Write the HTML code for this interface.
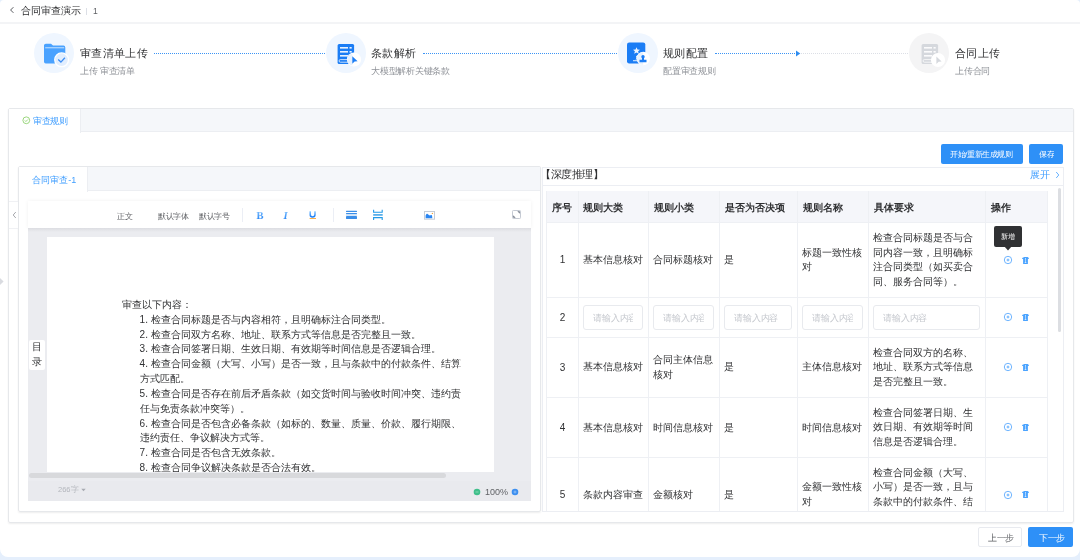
<!DOCTYPE html>
<html><head><meta charset="utf-8">
<style>
*{box-sizing:border-box;margin:0;padding:0}
html,body{width:1080px;height:560px;overflow:hidden}
body{background:#e5effc;font-family:"Liberation Sans",sans-serif;color:#303133;position:relative}
.abs{position:absolute}
.app{position:absolute;left:0;top:0;width:1080px;height:557.3px;background:#fff;border-radius:4px 4px 8px 8px;overflow:hidden}
.t{position:absolute;white-space:nowrap;line-height:1}
.app{will-change:transform}
</style></head><body>
<div class="app">
  <div class="abs" style="left:0;top:0;width:1080px;height:24px;border-bottom:2px solid #f3f4f6"></div>
  <svg class="abs" style="left:9px;top:6px" width="6" height="8" viewBox="0 0 6 8"><path d="M4.4 1.2 L1.6 4 L4.4 6.8" fill="none" stroke="#45474d" stroke-width=".9"/></svg>
  <div class="t" style="left:21px;top:5.7px;font-size:10px;color:#303133">合同审查演示</div>
  <div class="abs" style="left:86px;top:8px;width:1px;height:7px;background:#dcdfe6"></div>
  <div class="t" style="left:92.5px;top:6.5px;font-size:20px;transform:scale(0.4300);transform-origin:0 0;color:#606266">1</div>

  <div class="abs" style="left:34px;top:33px;width:40px;height:40px;border-radius:50%;background:#eff6ff"></div>
  <svg class="abs" style="left:42px;top:42px" width="28" height="26" viewBox="0 0 28 26">
    <path d="M2 3.5 Q2 1.7 3.8 1.7 H9 L11 3.6 H21.5 Q23.3 3.6 23.3 5.4 V19.8 Q23.3 21.6 21.5 21.6 H3.8 Q2 21.6 2 19.8 Z" fill="#4aa2ff"/>
    <rect x="3.2" y="5.2" width="19" height="1.1" fill="#bcdcff"/>
    <circle cx="19.6" cy="17.8" r="6.9" fill="#e1eeff" stroke="#fff" stroke-width="1.3"/>
    <path d="M16.2 17.5 L18.9 20.1 L22.9 15.8" fill="none" stroke="#3f8ff5" stroke-width="1.35"/>
  </svg>
  <div class="t" style="left:80px;top:46.5px;font-size:20px;transform:scale(0.5650);transform-origin:0 0;color:#303133">审查清单上传</div>
  <div class="t" style="left:80px;top:67.1px;font-size:20px;transform:scale(0.4375);transform-origin:0 0;color:#909399">上传 审查清单</div>
  <div class="abs" style="left:154px;top:53px;width:171px;border-top:1px dotted #3d95f5"></div>

  <div class="abs" style="left:325.7px;top:33px;width:40px;height:40px;border-radius:50%;background:#eff6ff"></div>
  <svg class="abs" style="left:336px;top:43px" width="26" height="26" viewBox="0 0 26 26">
    <rect x="1.6" y="1" width="16.5" height="20" rx="1.5" fill="#1b7df5"/>
    <rect x="4" y="4" width="8" height="1.6" fill="#fff" opacity=".9"/>
    <rect x="13.5" y="4" width="2.2" height="1.6" fill="#fff" opacity=".9"/>
    <rect x="4" y="8" width="8" height="1.6" fill="#fff" opacity=".9"/>
    <rect x="13.5" y="8" width="2.2" height="1.6" fill="#fff" opacity=".9"/>
    <rect x="4" y="12" width="8" height="1.6" fill="#fff" opacity=".9"/>
    <rect x="3.1" y="16.6" width="12" height="2.6" rx="1.2" fill="none" stroke="#fff" stroke-width=".75"/>
    <circle cx="18" cy="16.5" r="7.1" fill="#fff"/>
    <path d="M11.6 16.5 A6.2 6.2 0 0 1 16.3 10.5 V22.5 A6.2 6.2 0 0 1 11.6 16.5Z" fill="#e6f1ff"/>
    <path d="M16.3 13.3 L21.6 18.3 L18.6 18.6 L16.3 20.8 Z" fill="#1b7df5"/>
  </svg>
  <div class="t" style="left:371px;top:46.5px;font-size:20px;transform:scale(0.5650);transform-origin:0 0;color:#303133">条款解析</div>
  <div class="t" style="left:371px;top:67.1px;font-size:20px;transform:scale(0.4375);transform-origin:0 0;color:#909399">大模型解析关键条款</div>
  <div class="abs" style="left:423px;top:53px;width:194px;border-top:1px dotted #3d95f5"></div>

  <div class="abs" style="left:617.5px;top:33px;width:40px;height:40px;border-radius:50%;background:#eff6ff"></div>
  <svg class="abs" style="left:626px;top:41px" width="26" height="26" viewBox="0 0 26 26">
    <rect x="1" y="1.4" width="18.3" height="21" rx="2.2" fill="#1b7df5"/>
    <path d="M10.5 6.2 L11.5 8.6 L14 8.7 L12.1 10.3 L12.8 12.8 L10.5 11.4 L8.2 12.8 L8.9 10.3 L7 8.7 L9.5 8.6 Z" fill="#fff" opacity=".92"/>
    <path d="M11.6 14.4 L10 15.8 L11.6 17 L9.8 18.4" fill="none" stroke="#fff" stroke-width="1" opacity=".8"/>
    <rect x="7" y="19.2" width="4.5" height="1" fill="#fff" opacity=".85"/>
    <circle cx="17.2" cy="17.5" r="6.7" fill="#fff"/>
    <path d="M10.9 17.5 A6.3 6.3 0 0 1 17.2 11.2 V23.8 A6.3 6.3 0 0 1 10.9 17.5Z" fill="#e6f1ff"/>
    <circle cx="17" cy="15.7" r="1.7" fill="#1b7df5"/>
    <path d="M16 16.8 H18 V18.8 H20.5 V21.3 H13.5 V18.8 H16Z" fill="#1b7df5"/>
  </svg>
  <div class="t" style="left:662.7px;top:46.5px;font-size:20px;transform:scale(0.5650);transform-origin:0 0;color:#303133">规则配置</div>
  <div class="t" style="left:662.7px;top:67.1px;font-size:20px;transform:scale(0.4375);transform-origin:0 0;color:#909399">配置审查规则</div>
  <div class="abs" style="left:715px;top:53px;width:82px;border-top:1px dotted #3d95f5"></div>
  <svg class="abs" style="left:795px;top:50px" width="6" height="7" viewBox="0 0 6 7"><path d="M1 0.5 L5.3 3.5 L1 6.5Z" fill="#2d8cf0"/></svg>
  <div class="abs" style="left:801px;top:53px;width:107px;border-top:1px dotted #dcdfe6"></div>

  <div class="abs" style="left:909px;top:33px;width:40px;height:40px;border-radius:50%;background:#f4f4f5"></div>
  <svg class="abs" style="left:919.5px;top:43px" width="26" height="26" viewBox="0 0 26 26">
    <rect x="1.6" y="1" width="16.5" height="20" rx="1.5" fill="#d5d8dd"/>
    <rect x="4" y="4" width="8" height="1.6" fill="#fff" opacity=".9"/>
    <rect x="13.5" y="4" width="2.2" height="1.6" fill="#fff" opacity=".9"/>
    <rect x="4" y="8" width="8" height="1.6" fill="#fff" opacity=".9"/>
    <rect x="13.5" y="8" width="2.2" height="1.6" fill="#fff" opacity=".9"/>
    <rect x="4" y="12" width="8" height="1.6" fill="#fff" opacity=".9"/>
    <rect x="3.1" y="16.6" width="12" height="2.6" rx="1.2" fill="none" stroke="#fff" stroke-width=".75"/>
    <circle cx="18" cy="17" r="7.1" fill="#fff"/>
    <path d="M16.4 13.6 L21.6 18.4 L18.6 18.7 L16.4 20.9 Z" fill="#d5d8dd"/>
  </svg>
  <div class="t" style="left:954.6px;top:46.5px;font-size:20px;transform:scale(0.5650);transform-origin:0 0;color:#303133">合同上传</div>
  <div class="t" style="left:954.6px;top:67.1px;font-size:20px;transform:scale(0.4375);transform-origin:0 0;color:#909399">上传合同</div>

  <div class="abs" style="left:8px;top:107.5px;width:1066px;height:415px;border:1px solid #e6e8eb;border-radius:2px;box-shadow:0 1px 2px rgba(0,0,0,.07)"></div>
  <div class="abs" style="left:9px;top:108.5px;width:1064px;height:23.5px;background:#f5f7fa;border-bottom:1px solid #eceef2"></div>
  <div class="abs" style="left:9px;top:108.5px;width:72px;height:24.5px;background:#fff;border-right:1px solid #eceef2"></div>
  <svg class="abs" style="left:21.5px;top:116.2px" width="9" height="9" viewBox="0 0 9 9"><circle cx="4.3" cy="4.3" r="3.4" fill="none" stroke="#7cc957" stroke-width=".75"/><path d="M2.8 4.4 L3.9 5.5 L5.9 3.5" fill="none" stroke="#7cc957" stroke-width=".75"/></svg>
  <div class="t" style="left:33px;top:117.3px;font-size:20px;transform:scale(0.4350);transform-origin:0 0;color:#409eff">审查规则</div>

  <div class="abs" style="left:941px;top:144px;width:82px;height:20px;background:#2e90f7;border-radius:2px"></div>
  <div class="t" style="left:950px;top:150.6px;font-size:20px;transform:scale(0.3750);transform-origin:0 0;color:#fff">开始/重新生成规则</div>
  <div class="abs" style="left:1029px;top:144px;width:34px;height:20px;background:#2e90f7;border-radius:2px"></div>
  <div class="t" style="left:1039px;top:150.6px;font-size:20px;transform:scale(0.3750);transform-origin:0 0;color:#fff">保存</div>

  <div class="abs" style="left:18px;top:166px;width:523px;height:346px;border:1px solid #e6e8eb;border-radius:2px;box-shadow:0 1px 2px rgba(0,0,0,.07)"></div>
  <div class="abs" style="left:19px;top:167px;width:521px;height:23.5px;background:#f5f7fa;border-bottom:1px solid #eceef2"></div>
  <div class="abs" style="left:19px;top:167px;width:69px;height:24.5px;background:#fff;border-right:1px solid #eceef2"></div>
  <div class="t" style="left:31.5px;top:175px;font-size:20px;transform:scale(0.4525);transform-origin:0 0;color:#409eff">合同审查-1</div>

  <svg class="abs" style="left:0;top:277px" width="5" height="9" viewBox="0 0 5 9"><path d="M0 1 L3.6 4.5 L0 8Z" fill="#d9dbe0"/></svg>
  <div class="abs" style="left:9px;top:200.5px;width:9px;height:28.5px;background:#fff;border-top:1px solid #f0f1f4;border-bottom:1px solid #f0f1f4"></div>
  <svg class="abs" style="left:12px;top:211px" width="5" height="8" viewBox="0 0 5 8"><path d="M3.8 1 L1.2 4 L3.8 7" fill="none" stroke="#909399" stroke-width=".8"/></svg>

  <div class="abs" style="left:28px;top:228px;width:503px;height:273px;background:#ebecf0"></div>
  <div class="abs" style="left:28px;top:481px;width:503px;height:20px;background:#e9eaee"></div>
  <div class="abs" style="left:28px;top:201px;width:503px;height:27px;background:#fff;box-shadow:0 0 4px rgba(0,0,0,.06)"></div>
  <div class="abs" style="left:28px;top:228px;width:503px;height:4px;background:linear-gradient(#dcdde2,#ebecf0)"></div>
  <div class="t" style="left:117px;top:211.5px;font-size:20px;transform:scale(0.3850);transform-origin:0 0;color:#606266">正文</div>
  <div class="t" style="left:158px;top:211.5px;font-size:20px;transform:scale(0.3850);transform-origin:0 0;color:#606266">默认字体</div>
  <div class="t" style="left:199px;top:211.5px;font-size:20px;transform:scale(0.3850);transform-origin:0 0;color:#606266">默认字号</div>
  <div class="abs" style="left:242px;top:208px;width:1px;height:14px;background:#ebeef5"></div>
  <div class="abs" style="left:333px;top:208px;width:1px;height:14px;background:#ebeef5"></div>
  <svg class="abs" style="left:250px;top:204px" width="80" height="22" viewBox="0 0 80 22">
    <defs><linearGradient id="bg1" x1="0" y1="0" x2="0" y2="1"><stop offset="0" stop-color="#8cc8ff"/><stop offset="1" stop-color="#1a7df5"/></linearGradient></defs>
    <text x="6.6" y="14.8" font-family="Liberation Serif" font-weight="bold" font-size="10.6" fill="url(#bg1)">B</text>
    <text x="33.6" y="14.8" font-family="Liberation Serif" font-weight="bold" font-style="italic" font-size="10.6" fill="url(#bg1)">I</text>
    <path d="M60.2 7.2 V10.4 Q60.2 12.9 62.6 12.9 Q65 12.9 65 10.4 V7.2" fill="none" stroke="url(#bg1)" stroke-width="1.5"/>
    <rect x="59.6" y="14" width="6.4" height="0.9" fill="#f5a63c"/>
  </svg>
  <svg class="abs" style="left:340px;top:204px" width="50" height="22" viewBox="0 0 50 22">
    <rect x="6" y="6.7" width="11" height="1.2" rx=".5" fill="#3b8ee8"/>
    <rect x="6" y="9" width="11" height="1.2" rx=".5" fill="#3b8ee8"/>
    <rect x="6" y="10.7" width="11" height="1" fill="#c4dcf6"/>
    <rect x="6" y="12" width="11" height="3" rx=".4" fill="#3b8ee8"/>
    <path d="M33.6 5.8 V8.2 H42.2 V5.8" fill="none" stroke="#239ae8" stroke-width="1.1"/>
    <rect x="33.2" y="10" width="9.5" height="1.8" fill="#5ab0ea"/>
    <path d="M33.6 16 V13.6 H42.2 V16" fill="none" stroke="#239ae8" stroke-width="1.1"/>
  </svg>
  <svg class="abs" style="left:415px;top:204px" width="30" height="22" viewBox="0 0 30 22">
    <rect x="9.5" y="7.5" width="10" height="7.7" fill="#fff" stroke="#c5ccd6" stroke-width="1"/>
    <path d="M10.6 14.2 V11.6 Q11.4 9.2 12.3 9.8 Q13.6 11.2 14.8 11.4 Q15.8 10.8 16.6 11 Q17.3 11.6 17.3 14.2Z" fill="#2a86f2"/>
    <circle cx="17.4" cy="9.4" r=".7" fill="#f5a63c"/>
  </svg>
  <svg class="abs" style="left:502px;top:204px" width="30" height="22" viewBox="0 0 30 22">
    <rect x="10.5" y="6.5" width="8" height="8" rx=".8" fill="none" stroke="#c5cad3" stroke-width="1"/>
    <path d="M15.3 7.2 H17.8 V9.7Z" fill="#6d7582"/>
    <path d="M11.2 11.3 V13.8 H13.7Z" fill="#6d7582"/>
  </svg>
  <div class="abs" style="left:47px;top:237px;width:447px;height:235.2px;background:#fff"></div>
  <div class="abs" style="left:29px;top:340px;width:16px;height:30px;background:#fff;border-radius:2px"></div>
  <div class="t" style="left:32px;top:340.2px;font-size:10px;line-height:14.8px;color:#303133;white-space:normal;width:10px">目录</div>
  <div class="abs" style="left:47px;top:237px;width:447px;height:235.2px;overflow:hidden">
    <div class="abs" style="left:75px;top:61px;width:370px;font-size:10px;line-height:14.82px;color:#303133">
      <div>审查以下内容：</div>
      <div style="padding-left:17.6px">1. 检查合同标题是否与内容相符，且明确标注合同类型。<br>2. 检查合同双方名称、地址、联系方式等信息是否完整且一致。<br>3. 检查合同签署日期、生效日期、有效期等时间信息是否逻辑合理。<br>4. 检查合同金额（大写、小写）是否一致，且与条款中的付款条件、结算<br>方式匹配。<br>5. 检查合同是否存在前后矛盾条款（如交货时间与验收时间冲突、违约责<br>任与免责条款冲突等）。<br>6. 检查合同是否包含必备条款（如标的、数量、质量、价款、履行期限、<br>违约责任、争议解决方式等。<br>7. 检查合同是否包含无效条款。<br>8. 检查合同争议解决条款是否合法有效。</div>
    </div>
  </div>
  <div class="abs" style="left:28.5px;top:472.8px;width:417px;height:5.6px;background:#d8d9dc;border-radius:3px"></div>
  <div class="t" style="left:58px;top:486px;font-size:20px;transform:scale(0.3750);transform-origin:0 0;color:#b4b7bd">266字</div>
  <svg class="abs" style="left:81px;top:488px" width="5" height="4" viewBox="0 0 5 4"><path d="M0.3 0.8 H4.7 L2.5 3.3Z" fill="#a8abb2"/></svg>
  <svg class="abs" style="left:473px;top:488px" width="8" height="8" viewBox="0 0 8 8"><circle cx="4" cy="4" r="3.3" fill="#3fbf8a"/><path d="M2.5 4 H5.5" stroke="#a6e3c8" stroke-width=".7"/></svg>
  <div class="t" style="left:485px;top:487.5px;font-size:9px;color:#606266">100%</div>
  <svg class="abs" style="left:511px;top:488px" width="8" height="8" viewBox="0 0 8 8"><circle cx="4" cy="4" r="3.3" fill="#3c8ff0"/><path d="M2.5 4 H5.5 M4 2.5 V5.5" stroke="#a9cdf7" stroke-width=".7"/></svg>

  <div class="abs" style="left:541.5px;top:166.5px;width:522px;height:345px;border:1px solid #eceef3"></div>
  <div class="abs" style="left:542.5px;top:185px;width:520px;height:1px;background:#eceef3"></div>
  <div class="t" style="left:539.5px;top:168.6px;font-size:20px;transform:scale(0.5300);transform-origin:0 0;color:#303133">【深度推理】</div>
  <div class="t" style="left:1030px;top:170px;font-size:10px;color:#409eff">展开</div>
  <svg class="abs" style="left:1055px;top:171px" width="5" height="8" viewBox="0 0 5 8"><path d="M1.2 1 L3.8 4 L1.2 7" fill="none" stroke="#409eff" stroke-width=".8"/></svg>
  <div class="abs" style="left:546px;top:191px;width:1px;height:320px;background:#eef0f4"></div>
  <div class="abs" style="left:1058px;top:188px;width:3px;height:144px;background:#dcdee2;border-radius:2px"></div>
  <div class="abs" style="left:547px;top:191px;width:501px;height:320px;overflow:hidden">
    <div class="abs" style="left:0;top:0;width:501px;height:31.8px;background:#f5f6fa;border-bottom:1px solid #eef0f4"></div>
    <div class="t" style="left:5px;top:11.5px;font-size:10px;font-weight:bold;color:#303133">序号</div>
    <div class="t" style="left:36px;top:11.5px;font-size:10px;font-weight:bold;color:#303133">规则大类</div>
    <div class="t" style="left:106.5px;top:11.5px;font-size:10px;font-weight:bold;color:#303133">规则小类</div>
    <div class="t" style="left:177.5px;top:11.5px;font-size:10px;font-weight:bold;color:#303133">是否为否决项</div>
    <div class="t" style="left:255.5px;top:11.5px;font-size:10px;font-weight:bold;color:#303133">规则名称</div>
    <div class="t" style="left:326.5px;top:11.5px;font-size:10px;font-weight:bold;color:#303133">具体要求</div>
    <div class="t" style="left:443.5px;top:11.5px;font-size:10px;font-weight:bold;color:#303133">操作</div>
    <div class="abs" style="left:30.5px;top:0;width:1px;height:330px;background:#eef0f4"></div>
    <div class="abs" style="left:101.0px;top:0;width:1px;height:330px;background:#eef0f4"></div>
    <div class="abs" style="left:172.0px;top:0;width:1px;height:330px;background:#eef0f4"></div>
    <div class="abs" style="left:250.0px;top:0;width:1px;height:330px;background:#eef0f4"></div>
    <div class="abs" style="left:321.0px;top:0;width:1px;height:330px;background:#eef0f4"></div>
    <div class="abs" style="left:438.0px;top:0;width:1px;height:330px;background:#eef0f4"></div>
    <div class="abs" style="left:500px;top:0;width:1px;height:330px;background:#eef0f4"></div>
    <div class="abs" style="left:0;top:105.6px;width:501px;height:1px;background:#eef0f4"></div>
    <div class="t" style="left:0;width:31px;text-align:center;top:64.45px;font-size:10px;color:#303133">1</div>
    <div class="abs" style="left:35.5px;top:62.05px;width:61.5px;font-size:10px;line-height:14.8px;color:#303133">基本信息核对</div>
    <div class="abs" style="left:106.0px;top:62.05px;width:62.0px;font-size:10px;line-height:14.8px;color:#303133">合同标题核对</div>
    <div class="abs" style="left:177.0px;top:62.05px;width:69.0px;font-size:10px;line-height:14.8px;color:#303133">是</div>
    <div class="abs" style="left:255.0px;top:54.65px;width:62.0px;font-size:10px;line-height:14.8px;color:#303133">标题一致性核对</div>
    <div class="abs" style="left:325.8px;top:39.85px;width:108.0px;font-size:10px;line-height:14.8px;color:#303133">检查合同标题是否与合同内容一致，且明确标注合同类型（如买卖合同、服务合同等）。</div>
    <svg class="abs" style="left:456px;top:63.95px" width="10" height="10" viewBox="0 0 10 10"><circle cx="5" cy="5" r="3.7" fill="none" stroke="#56a8ff" stroke-width=".85"/><path d="M5 3.6 V6.4 M3.6 5 H6.4" stroke="#56a8ff" stroke-width=".9"/></svg>
    <svg class="abs" style="left:475px;top:64.65px" width="8" height="9" viewBox="0 0 8 9"><path d="M2.3 0.9 H5.7 L6.8 2.1 V2.9 H5.9 V7.9 H1.1 V2.9 H0.2 V2.1 Z" fill="#4aa3ff"/><path d="M2.9 2 H4.1 L3.8 2.6 V6.3 H4.3 V6.9 H2.7 V6.3 H3.2 V2.6Z" fill="#fff" opacity=".85"/></svg>
    <div class="abs" style="left:0;top:145.6px;width:501px;height:1px;background:#eef0f4"></div>
    <div class="t" style="left:0;width:31px;text-align:center;top:121.6px;font-size:10px;color:#303133">2</div>
    <div class="abs" style="left:36px;top:114.1px;width:60px;height:24.5px;border:1px solid #e8eaee;border-radius:3px"><div class="abs" style="left:9px;right:9px;top:0;bottom:0;overflow:hidden"><div class="t" style="left:0.3px;top:7.4px;font-size:20px;transform:scale(0.4425);transform-origin:0 0;color:#c4c7cd">请输入内容</div></div></div>
    <div class="abs" style="left:106px;top:114.1px;width:61px;height:24.5px;border:1px solid #e8eaee;border-radius:3px"><div class="abs" style="left:9px;right:9px;top:0;bottom:0;overflow:hidden"><div class="t" style="left:0.3px;top:7.4px;font-size:20px;transform:scale(0.4425);transform-origin:0 0;color:#c4c7cd">请输入内容</div></div></div>
    <div class="abs" style="left:177px;top:114.1px;width:68px;height:24.5px;border:1px solid #e8eaee;border-radius:3px"><div class="abs" style="left:9px;right:9px;top:0;bottom:0;overflow:hidden"><div class="t" style="left:0.3px;top:7.4px;font-size:20px;transform:scale(0.4425);transform-origin:0 0;color:#c4c7cd">请输入内容</div></div></div>
    <div class="abs" style="left:255px;top:114.1px;width:61px;height:24.5px;border:1px solid #e8eaee;border-radius:3px"><div class="abs" style="left:9px;right:9px;top:0;bottom:0;overflow:hidden"><div class="t" style="left:0.3px;top:7.4px;font-size:20px;transform:scale(0.4425);transform-origin:0 0;color:#c4c7cd">请输入内容</div></div></div>
    <div class="abs" style="left:326px;top:114.1px;width:107px;height:24.5px;border:1px solid #e8eaee;border-radius:3px"><div class="abs" style="left:9px;right:9px;top:0;bottom:0;overflow:hidden"><div class="t" style="left:0.3px;top:7.4px;font-size:20px;transform:scale(0.4425);transform-origin:0 0;color:#c4c7cd">请输入内容</div></div></div>
    <svg class="abs" style="left:456px;top:121.1px" width="10" height="10" viewBox="0 0 10 10"><circle cx="5" cy="5" r="3.7" fill="none" stroke="#56a8ff" stroke-width=".85"/><path d="M5 3.6 V6.4 M3.6 5 H6.4" stroke="#56a8ff" stroke-width=".9"/></svg>
    <svg class="abs" style="left:475px;top:121.8px" width="8" height="9" viewBox="0 0 8 9"><path d="M2.3 0.9 H5.7 L6.8 2.1 V2.9 H5.9 V7.9 H1.1 V2.9 H0.2 V2.1 Z" fill="#4aa3ff"/><path d="M2.9 2 H4.1 L3.8 2.6 V6.3 H4.3 V6.9 H2.7 V6.3 H3.2 V2.6Z" fill="#fff" opacity=".85"/></svg>
    <div class="abs" style="left:0;top:205.8px;width:501px;height:1px;background:#eef0f4"></div>
    <div class="t" style="left:0;width:31px;text-align:center;top:171.7px;font-size:10px;color:#303133">3</div>
    <div class="abs" style="left:35.5px;top:169.3px;width:61.5px;font-size:10px;line-height:14.8px;color:#303133">基本信息核对</div>
    <div class="abs" style="left:106.0px;top:161.9px;width:62.0px;font-size:10px;line-height:14.8px;color:#303133">合同主体信息核对</div>
    <div class="abs" style="left:177.0px;top:169.3px;width:69.0px;font-size:10px;line-height:14.8px;color:#303133">是</div>
    <div class="abs" style="left:255.0px;top:169.3px;width:62.0px;font-size:10px;line-height:14.8px;color:#303133">主体信息核对</div>
    <div class="abs" style="left:325.8px;top:154.5px;width:108.0px;font-size:10px;line-height:14.8px;color:#303133">检查合同双方的名称、地址、联系方式等信息是否完整且一致。</div>
    <svg class="abs" style="left:456px;top:171.2px" width="10" height="10" viewBox="0 0 10 10"><circle cx="5" cy="5" r="3.7" fill="none" stroke="#56a8ff" stroke-width=".85"/><path d="M5 3.6 V6.4 M3.6 5 H6.4" stroke="#56a8ff" stroke-width=".9"/></svg>
    <svg class="abs" style="left:475px;top:171.9px" width="8" height="9" viewBox="0 0 8 9"><path d="M2.3 0.9 H5.7 L6.8 2.1 V2.9 H5.9 V7.9 H1.1 V2.9 H0.2 V2.1 Z" fill="#4aa3ff"/><path d="M2.9 2 H4.1 L3.8 2.6 V6.3 H4.3 V6.9 H2.7 V6.3 H3.2 V2.6Z" fill="#fff" opacity=".85"/></svg>
    <div class="abs" style="left:0;top:266.0px;width:501px;height:1px;background:#eef0f4"></div>
    <div class="t" style="left:0;width:31px;text-align:center;top:231.9px;font-size:10px;color:#303133">4</div>
    <div class="abs" style="left:35.5px;top:229.5px;width:61.5px;font-size:10px;line-height:14.8px;color:#303133">基本信息核对</div>
    <div class="abs" style="left:106.0px;top:229.5px;width:62.0px;font-size:10px;line-height:14.8px;color:#303133">时间信息核对</div>
    <div class="abs" style="left:177.0px;top:229.5px;width:69.0px;font-size:10px;line-height:14.8px;color:#303133">是</div>
    <div class="abs" style="left:255.0px;top:229.5px;width:62.0px;font-size:10px;line-height:14.8px;color:#303133">时间信息核对</div>
    <div class="abs" style="left:325.8px;top:214.7px;width:108.0px;font-size:10px;line-height:14.8px;color:#303133">检查合同签署日期、生效日期、有效期等时间信息是否逻辑合理。</div>
    <svg class="abs" style="left:456px;top:231.4px" width="10" height="10" viewBox="0 0 10 10"><circle cx="5" cy="5" r="3.7" fill="none" stroke="#56a8ff" stroke-width=".85"/><path d="M5 3.6 V6.4 M3.6 5 H6.4" stroke="#56a8ff" stroke-width=".9"/></svg>
    <svg class="abs" style="left:475px;top:232.1px" width="8" height="9" viewBox="0 0 8 9"><path d="M2.3 0.9 H5.7 L6.8 2.1 V2.9 H5.9 V7.9 H1.1 V2.9 H0.2 V2.1 Z" fill="#4aa3ff"/><path d="M2.9 2 H4.1 L3.8 2.6 V6.3 H4.3 V6.9 H2.7 V6.3 H3.2 V2.6Z" fill="#fff" opacity=".85"/></svg>
    <div class="abs" style="left:0;top:340.3px;width:501px;height:1px;background:#eef0f4"></div>
    <div class="t" style="left:0;width:31px;text-align:center;top:299.15px;font-size:10px;color:#303133">5</div>
    <div class="abs" style="left:35.5px;top:296.75px;width:61.5px;font-size:10px;line-height:14.8px;color:#303133">条款内容审查</div>
    <div class="abs" style="left:106.0px;top:296.75px;width:62.0px;font-size:10px;line-height:14.8px;color:#303133">金额核对</div>
    <div class="abs" style="left:177.0px;top:296.75px;width:69.0px;font-size:10px;line-height:14.8px;color:#303133">是</div>
    <div class="abs" style="left:255.0px;top:289.35px;width:62.0px;font-size:10px;line-height:14.8px;color:#303133">金额一致性核对</div>
    <div class="abs" style="left:325.8px;top:274.55px;width:108.0px;font-size:10px;line-height:14.8px;color:#303133">检查合同金额（大写、小写）是否一致，且与条款中的付款条件、结算方式匹配。</div>
    <svg class="abs" style="left:456px;top:298.65px" width="10" height="10" viewBox="0 0 10 10"><circle cx="5" cy="5" r="3.7" fill="none" stroke="#56a8ff" stroke-width=".85"/><path d="M5 3.6 V6.4 M3.6 5 H6.4" stroke="#56a8ff" stroke-width=".9"/></svg>
    <svg class="abs" style="left:475px;top:299.35px" width="8" height="9" viewBox="0 0 8 9"><path d="M2.3 0.9 H5.7 L6.8 2.1 V2.9 H5.9 V7.9 H1.1 V2.9 H0.2 V2.1 Z" fill="#4aa3ff"/><path d="M2.9 2 H4.1 L3.8 2.6 V6.3 H4.3 V6.9 H2.7 V6.3 H3.2 V2.6Z" fill="#fff" opacity=".85"/></svg>
  </div>
  <div class="abs" style="left:994px;top:226px;width:28px;height:21px;background:#303133;border-radius:2px"></div>
  <svg class="abs" style="left:1003px;top:246px" width="10" height="5" viewBox="0 0 10 5"><path d="M1 0 H9 L5 4.5Z" fill="#303133"/></svg>
  <div class="t" style="left:1001px;top:233px;font-size:7px;color:#fff">新增</div>

  <div class="abs" style="left:978px;top:527px;width:44px;height:20px;background:#fff;border:1px solid #e8eaef;border-radius:2px"></div>
  <div class="t" style="left:987.5px;top:533.5px;font-size:20px;transform:scale(0.4300);transform-origin:0 0;color:#606266">上一步</div>
  <div class="abs" style="left:1028px;top:527px;width:45px;height:20px;background:#2e90f7;border-radius:2px"></div>
  <div class="t" style="left:1039px;top:533.5px;font-size:20px;transform:scale(0.4300);transform-origin:0 0;color:#fff">下一步</div>
</div>
</body></html>
